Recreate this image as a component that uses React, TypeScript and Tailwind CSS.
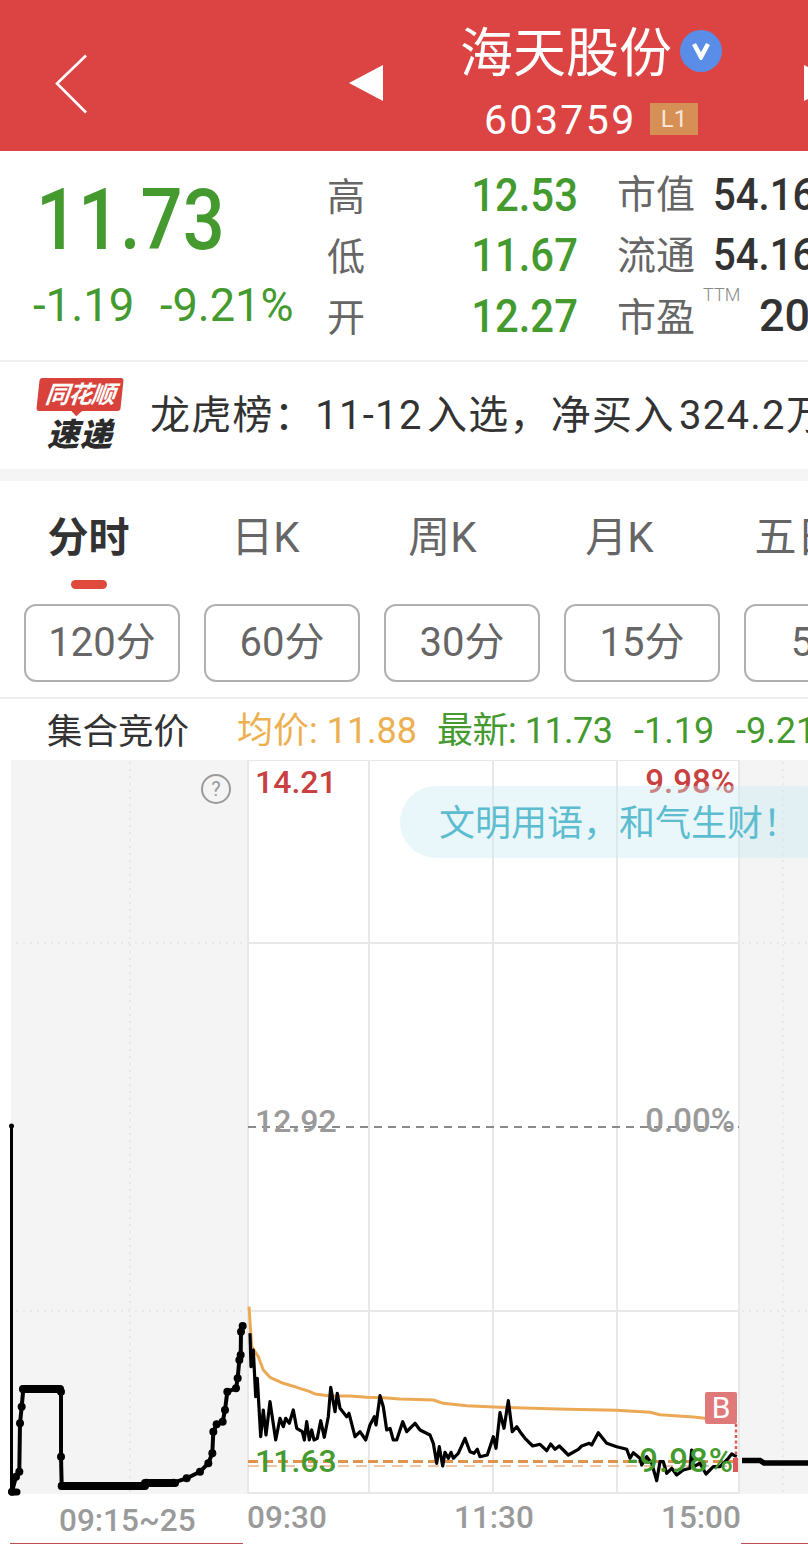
import React from 'react';

// chart coordinates were read from zoomed crops, zoom px / 3 + crop origin
const fromCrop = (pts: number[][], ox: number, oy: number) =>
  pts.map(([x, y]) => [ox + x / 3, oy + y / 3]);
const toPoints = (pts: number[][]) => pts.map(([x, y]) => `${x.toFixed(1)},${y.toFixed(1)}`).join(' ');

const auctionPts = fromCrop(
  [[36, 605], [48, 560], [58, 545], [60, 400], [65, 350], [70, 298], [178, 298], [183, 305], [183, 500], [185, 588], [430, 588], [440, 578], [520, 578], [560, 565], [600, 545], [625, 520], [637, 490], [640, 425], [650, 403], [668, 395], [675, 360], [682, 305], [708, 295], [713, 265], [718, 210], [722, 195], [723, 125], [728, 108]],
  0, 1290,
);

const pricePts = [
  ...fromCrop(
    [[30, 100], [33, 200], [40, 150], [47, 290], [52, 235], [62, 410], [70, 330], [78, 405], [90, 305], [107, 420], [120, 355], [130, 380], [137, 355], [148, 370], [160, 330], [170, 385], [187, 395], [193, 420], [200, 365], [208, 420], [215, 390], [222, 420], [232, 415], [242, 362], [253, 412], [265, 350], [272, 262], [285, 335], [292, 280], [300, 325], [320, 350], [327, 340], [345, 410], [360, 395], [377, 420], [390, 375], [403, 350], [408, 375], [420, 287], [430, 320], [440, 390], [450, 385], [460, 420], [470, 420]],
    240, 1300,
  ),
  ...fromCrop(
    [[0, 420], [8, 395], [20, 425], [45, 400], [60, 420], [90, 435], [100, 460], [110, 520], [118, 470], [128, 528], [135, 487], [145, 505], [153, 487], [160, 505], [175, 490], [195, 445], [210, 485], [222, 490], [232, 478], [240, 500], [262, 495], [280, 440], [288, 475], [300, 368], [312, 415], [325, 332], [337, 425], [350, 410], [360, 425], [375, 445], [398, 468], [420, 463], [440, 482], [452, 462], [465, 478], [478, 468], [505, 495], [535, 478], [545, 468], [568, 460], [575, 465], [595, 428], [620, 460], [650, 470], [680, 478], [690, 505], [700, 488], [720, 505], [725, 525], [740, 500], [755, 520], [770, 572], [780, 515], [790, 515], [800, 550], [815, 535], [830, 555], [850, 540], [870, 535], [875, 480], [880, 530], [900, 520], [918, 552], [940, 530], [960, 530], [985, 505], [995, 492], [1010, 500]],
    400, 1290,
  ),
];

const avgPts = [
  ...fromCrop(
    [[27, 20], [35, 140], [55, 170], [70, 210], [90, 232], [130, 250], [170, 262], [210, 275], [225, 282], [270, 288], [330, 288], [380, 292], [430, 293], [480, 297]],
    240, 1300,
  ),
  ...fromCrop(
    [[0, 327], [100, 330], [130, 340], [200, 347], [300, 352], [500, 358], [650, 361], [750, 367], [780, 374], [880, 381], [1010, 395]],
    400, 1290,
  ),
];

const stats = [
  { label: '高', value: '12.53', name: '市值', extra: '54.16亿' },
  { label: '低', value: '11.67', name: '流通', extra: '54.16亿' },
  { label: '开', value: '12.27', name: '市盈', extra: '20.15', ttm: true },
];

const tabs = ['分时', '日K', '周K', '月K', '五日'];
const periods = ['120分', '60分', '30分', '15分', '5分'];

const Chart: React.FC = () => (
  <svg className="absolute left-0 top-[61px] block" width="808" height="784" viewBox="0 760 808 784">
    {/* pre and post market shading */}
    <rect x="11" y="760" width="237" height="734" fill="#f4f4f4" />
    <rect x="740" y="760" width="68" height="734" fill="#f4f4f4" />

    {/* grid */}
    <g stroke="#e8e8e8" strokeWidth="2" fill="none">
      <path d="M248 760V1494M369 760V1494M493 760V1494M617 760V1494M739 760V1494" />
      <path d="M248 943H739M248 1311H739M248 1493H739M248 760H739" />
      <path d="M16 943H246M16 1311H246M742 943H808M742 1311H808M130 762V1492M783 762V1492" strokeDasharray="2 5" />
    </g>
    <path d="M248 1127H739" stroke="#8a8a8a" strokeWidth="2" strokeDasharray="8 6" fill="none" />

    {/* auction line */}
    <path d="M11.5 1125V1494" stroke="#000" strokeWidth="3" fill="none" />
    <circle cx="11.5" cy="1126" r="2.5" fill="#000" />
    <polyline points={toPoints(auctionPts)} fill="none" stroke="#000" strokeWidth="4" strokeLinejoin="round" />
    <path d="M23 1389H60M62 1486H145M145 1483H175" stroke="#000" strokeWidth="8" strokeLinecap="round" fill="none" />
    <path d="M12 1492H17" stroke="#000" strokeWidth="7" strokeLinecap="round" fill="none" />
    {auctionPts.map(([x, y], i) => (
      <circle key={i} cx={x} cy={y} r="4" fill="#000" />
    ))}

    {/* closing dashes */}
    <path d="M248 1461.5H737" stroke="#e0924f" strokeWidth="3" strokeDasharray="10 5" fill="none" />
    <path d="M248 1466H737" stroke="#e8b48c" strokeWidth="1.5" strokeDasharray="11 7" fill="none" />

    <polyline points={toPoints(avgPts)} fill="none" stroke="#eba956" strokeWidth="3" strokeLinejoin="round" />
    <polyline points={toPoints(pricePts)} fill="none" stroke="#000" strokeWidth="3.2" strokeLinejoin="round" />

    {/* after hours */}
    <path d="M742 1460.5H760L764 1463H808" stroke="#000" strokeWidth="5.5" fill="none" />

    {/* trade marker */}
    <path d="M736 1424V1470" stroke="#dc5a5a" strokeWidth="2.5" strokeDasharray="3 2.5" fill="none" />
    <rect x="733" y="1458" width="5" height="14" fill="#dc5a5a" />
  </svg>
);

const App: React.FC = () => {
  return (
    <div className="w-[808px] h-[1544px] overflow-hidden bg-white font-['Roboto','Noto_Sans_CJK_SC',sans-serif]">
      {/* header */}
      <div className="relative h-[151px] bg-[#dc4443] flex items-start text-white">
        <svg className="mt-[54px] ml-[54px] shrink-0" width="34" height="60" viewBox="0 0 34 60" fill="none">
          <path d="M32 1.5L3 29.5L32 58.5" stroke="#fff" strokeWidth="2.6" />
        </svg>
        <svg className="mt-[65px] ml-[261px] shrink-0" width="34" height="36" viewBox="0 0 34 36">
          <path d="M0 18L34 0V36Z" fill="#fff" />
        </svg>
        <div className="ml-[77px] flex flex-col shrink-0">
          <div className="flex items-center h-[102px] -mt-[1px]">
            <span className="mt-[8px] text-[53px] leading-none font-normal">海天股份</span>
            <span className="ml-[8px] mt-[2px] w-[42px] h-[42px] rounded-full bg-[#5a8de8] flex items-center justify-center">
              <svg width="20" height="18" viewBox="0 0 20 18" fill="none">
                <path d="M3 2L10 15L17 2" stroke="#fff" strokeWidth="4.5" />
              </svg>
            </span>
          </div>
          <div className="flex items-start ml-[24px]">
            <span className="text-[41px] leading-[32px] w-[150px] font-normal tracking-[2.4px] mt-[3px]">603759</span>
            <span className="ml-[16px] mt-[2px] w-[48px] h-[32px] bg-[#d68f54] text-[#f8e8d8] text-[24px] leading-[32px] text-center font-normal">L1</span>
          </div>
        </div>
        <svg className="absolute left-[804px] top-[65px]" width="34" height="36" viewBox="0 0 34 36">
          <path d="M34 18L0 0V36Z" fill="#fff" />
        </svg>
      </div>

      {/* quote */}
      <div className="h-[211px] flex border-b-2 border-[#eeeeee] overflow-hidden">
        <div className="w-[327px] shrink-0">
          <div className="mt-[22px] ml-[36px] h-[94px] text-[86px] leading-[94px] font-medium text-[#449a2f]">
            <span className="inline-block scale-x-[0.86] origin-left">11.73</span>
          </div>
          <div className="mt-[14px] ml-[33px] flex text-[47px] leading-[48px] text-[#449a2f] whitespace-nowrap">
            <span className="w-[127px] shrink-0"><span className="inline-block scale-x-[0.97] origin-left">-1.19</span></span>
            <span><span className="inline-block scale-x-[0.96] origin-left">-9.21%</span></span>
          </div>
        </div>
        <div className="pt-[13px] flex flex-col whitespace-nowrap">
          {stats.map((s) => (
            <div key={s.label} className="h-[60.5px] flex items-center">
              <span className="w-[38px] mt-[5px] text-[38px] leading-none text-[#666666] font-normal">{s.label}</span>
              <span className="w-[106px] ml-[93px] shrink-0 text-right text-[47px] leading-none font-medium text-[#449a2f]">
                <span className="inline-block scale-x-[0.89] origin-right">{s.value}</span>
              </span>
              <span className={s.ttm ? 'ml-[53px] mt-[6px] w-[78px] text-[39px] leading-none text-[#666666] font-normal shrink-0' : 'ml-[53px] mt-[3px] w-[78px] text-[39px] leading-none text-[#666666] font-normal shrink-0'}>{s.name}</span>
              {s.ttm ? (
                <>
                  <span className="w-[45px] ml-[8px] -mt-[40px] shrink-0 text-[18px] leading-none text-[#888888] font-light">TTM</span>
                  <span className="ml-[11px] text-[45px] leading-none font-medium text-[#333333]">{s.extra}</span>
                </>
              ) : (
                <span className="ml-[18px] text-[45px] leading-none font-medium text-[#333333]">
                  <span className="inline-block scale-x-[0.89] origin-left">{s.extra}</span>
                </span>
              )}
            </div>
          ))}
        </div>
      </div>

      {/* news ticker */}
      <div className="h-[107px] flex items-center overflow-hidden whitespace-nowrap">
        <div className="ml-[37px] w-[86px] shrink-0 flex flex-col items-center -mt-[2px]">
          <div className="relative w-[84px] h-[33px] bg-[#d8423a] rounded-[3px] -skew-x-6 flex items-center justify-center">
            <span className="text-[24px] leading-none font-bold italic text-white tracking-[-1px]">同花顺</span>
            <span className="absolute left-[36px] top-[32px] w-[9px] h-[9px] bg-[#d8423a] rotate-45 -translate-y-1/2" />
          </div>
          <span className="mt-[8px] text-[32px] leading-[32px] font-black italic text-[#2b2b2b] tracking-[1px]">速递</span>
        </div>
        <span className="ml-[27px] text-[40px] leading-none text-[#333333] font-normal tracking-[1.3px] [word-spacing:-7px]">龙虎榜：11-12 入选，净买入 324.2万元</span>
      </div>

      <div className="h-[12px] bg-[#f5f5f5]" />

      {/* period tabs */}
      <div className="h-[123px] overflow-hidden flex whitespace-nowrap">
        {tabs.map((t, i) => (
          <div key={t} className="w-[177px] shrink-0 flex flex-col items-center pt-[33px]">
            <span className={i === 0 ? 'text-[41px] leading-[48px] font-bold text-[#333333]' : 'text-[42px] leading-[48px] font-normal text-[#666666]'}>{t}</span>
            {i === 0 && <span className="mt-[18px] w-[36px] h-[9px] rounded-full bg-[#e04a3c]" />}
          </div>
        ))}
      </div>
      <div className="h-[95px] border-b-2 border-[#eeeeee] overflow-hidden">
        <div className="flex gap-[24px] pl-[24px]">
          {periods.map((p) => (
            <div key={p} className="w-[156px] h-[78px] shrink-0 border-2 border-[#b0b0b0] rounded-[12px] flex items-center justify-center text-[40px] leading-none font-normal text-[#666666]">
              {p}
            </div>
          ))}
        </div>
      </div>

      {/* price line and chart */}
      <div className="relative h-[845px]">
        <Chart />
        <div className="relative h-[61px] flex items-center whitespace-nowrap overflow-hidden">
          <span className="ml-[47px] w-[190px] shrink-0 text-[35.5px] leading-none font-normal text-[#333333] mt-[7px]">集合竞价</span>
          <span className="shrink-0 w-[200px] text-[36px] leading-none text-[#edb050] mt-[3px]">均价: 11.88</span>
          <span className="shrink-0 w-[197px] text-[36px] leading-none text-[#449a2f] mt-[3px] tracking-[-0.5px]">最新: 11.73</span>
          <span className="shrink-0 w-[102px] text-[36px] leading-none text-[#449a2f] mt-[3px]">-1.19</span>
          <span className="shrink-0 text-[36px] leading-none text-[#449a2f] mt-[3px]">-9.21%</span>
        </div>

        {/* labels over the chart */}
        <span className="absolute left-[255px] top-[66px] text-[32px] leading-[34px] font-medium text-[#c8403f]">14.21</span>
        <span className="absolute right-[73px] top-[66px] text-[33px] leading-[34px] font-medium text-[#c8403f]">9.98%</span>
        <span className="absolute left-[255px] top-[405px] text-[32px] leading-[34px] font-medium text-[#9a9a9a]">12.92</span>
        <span className="absolute right-[73px] top-[405px] text-[33px] leading-[34px] font-medium text-[#9a9a9a]">0.00%</span>
        <span className="absolute left-[255px] top-[745px] text-[32px] leading-[34px] font-medium text-[#449a2f]">11.63</span>
        <span className="absolute right-[74px] top-[745px] text-[33px] leading-[34px] font-medium tracking-[1px] text-[#449a2f]">-9.98%</span>

        <span className="absolute left-[201px] top-[75px] w-[30px] h-[30px] rounded-full border-2 border-[#9a9a9a] text-[#9a9a9a] text-[20px] leading-[26px] text-center">?</span>

        <div className="absolute left-[400px] top-[87px] w-[440px] h-[72px] rounded-full bg-[#c8ebf2]/40 pl-[39px] pt-[4px] flex items-center text-[36px] leading-none text-[#5dbdd0] font-normal whitespace-nowrap">
          文明用语，和气生财！
        </div>

        <span className="absolute left-[705px] top-[693px] w-[32px] h-[32px] rounded-[2px] bg-[#e07a7a] text-white text-[30px] leading-[32px] text-center">B</span>

        {/* time axis */}
        <div className="absolute left-0 right-0 top-[795px] h-[48px] flex text-[31.5px] leading-[48px] font-medium text-[#9a9a9a] whitespace-nowrap">
          <span className="ml-[59px] w-[188px] shrink-0 pt-[3px]">09:15~25</span>
          <span className="w-[207px] shrink-0">09:30</span>
          <span className="w-[207px] shrink-0">11:30</span>
          <span>15:00</span>
        </div>
        <div className="absolute left-[10px] top-[844px] w-[233px] h-px bg-[#c05050]" />
        <div className="absolute left-[741px] top-[844px] w-[67px] h-px bg-[#c05050]" />
      </div>
    </div>
  );
};

export default App;
